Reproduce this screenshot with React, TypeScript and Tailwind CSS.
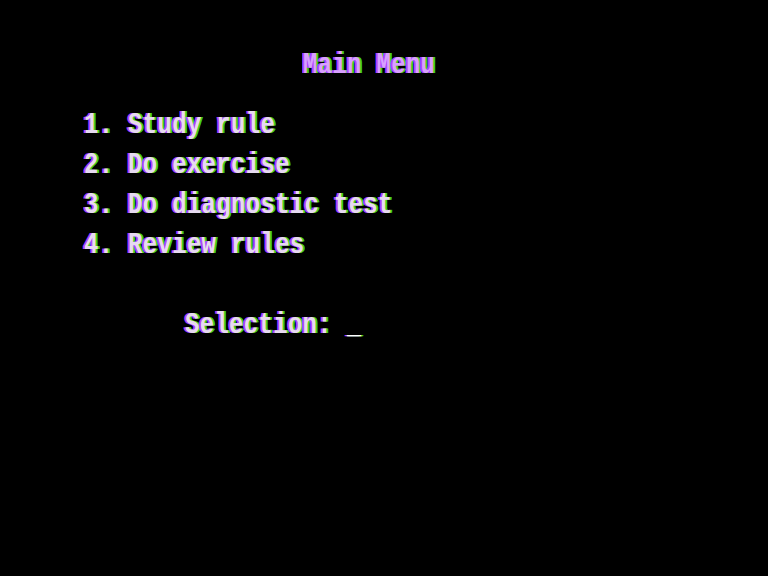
const fringe = {
  textShadow: '-2px 0 #b040ff, 2px 0 #3ccf1e, 1px 0 #70d850',
}

function Line({ children, className = '' }: { children: React.ReactNode; className?: string }) {
  return (
    <div className={`h-[40px] leading-[40px] whitespace-pre scale-y-[1.2] ${className}`}>
      {children}
    </div>
  )
}

export default function App() {
  const items = ['1. Study rule', '2. Do exercise', '3. Do diagnostic test', '4. Review rules']
  return (
    <div
      className="w-[768px] h-[576px] bg-black text-[#e6daf0] font-bold text-[24px] tracking-[0.3px] pt-[46px] pl-[84px] overflow-hidden"
      style={{ fontFamily: '"Liberation Mono", "DejaVu Sans Mono", monospace', ...fringe }}
    >
      <Line className="pl-[219px] text-[#d8a0ff]">Main Menu</Line>
      <div className="mt-[20px]">
        {items.map((t) => (
          <Line key={t}>{t}</Line>
        ))}
      </div>
      <Line className="mt-[40px] pl-[101px]">
        Selection:{' '}
        <span className="text-white">_</span>
      </Line>
    </div>
  )
}
